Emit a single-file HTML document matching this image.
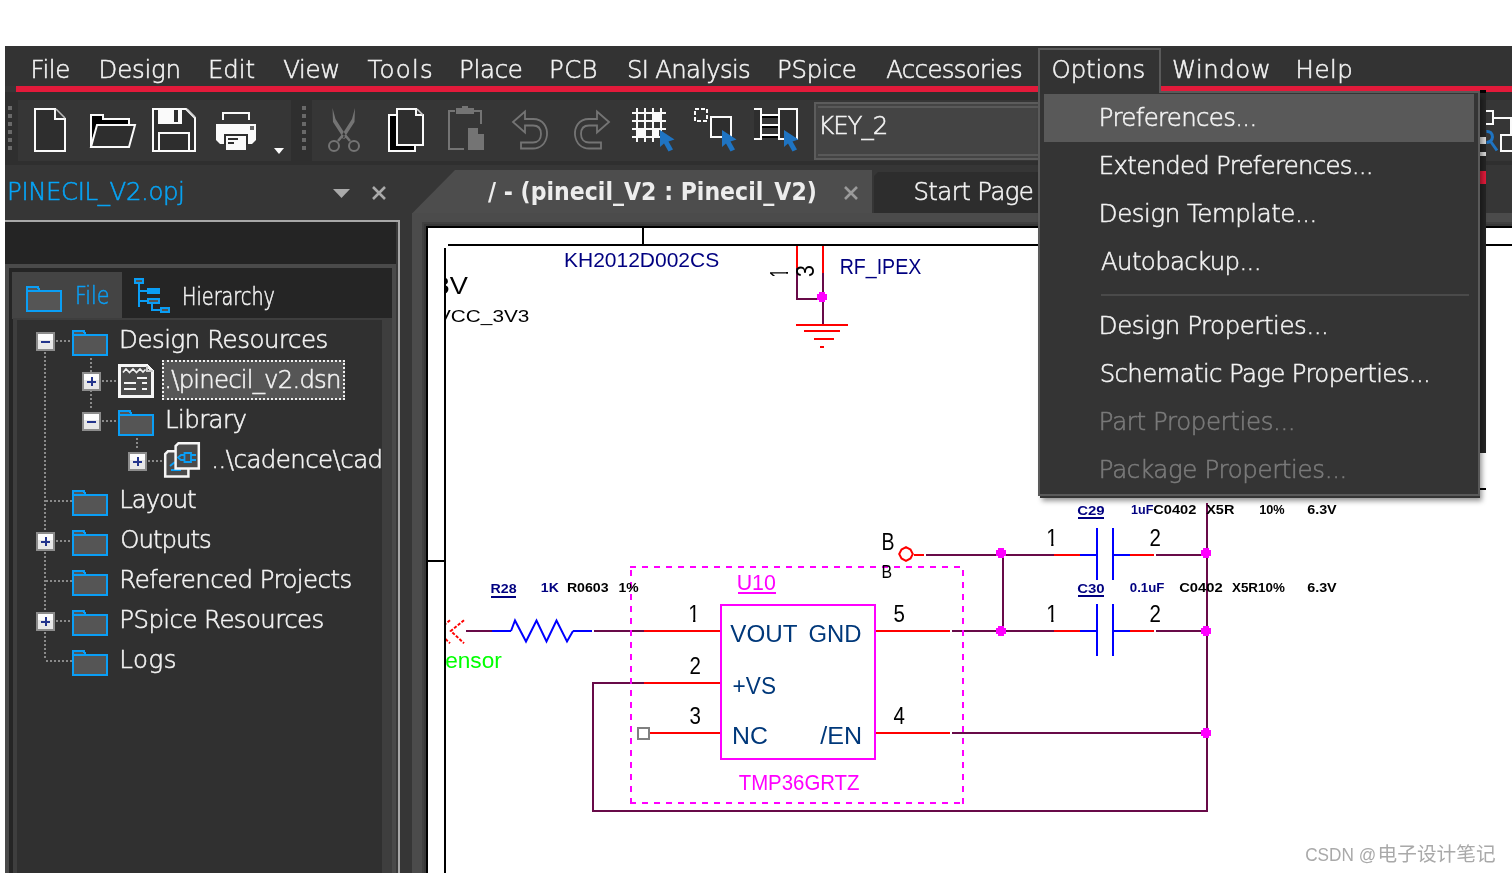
<!DOCTYPE html>
<html><head><meta charset="utf-8"><title>OrCAD Capture - Options</title>
<style>
html,body{margin:0;padding:0;background:#fff;}
body{width:1512px;height:873px;position:relative;overflow:hidden;}
.b{position:absolute;box-sizing:border-box;}
.t{position:absolute;white-space:pre;}
svg{position:absolute;left:0;top:0;}
</style></head><body><div id="app" style="position:absolute;left:0;top:0;width:1512px;height:873px;will-change:transform;">

<div class="b" style="left:5px;top:46px;width:1507px;height:827px;background:#363636;"></div>
<div class="b" style="left:5px;top:46px;width:1507px;height:40px;background:#333333;"></div>
<div class="b" style="left:16px;top:86px;width:1496px;height:6px;background:#e21a3a;"></div>
<div class="b" style="left:5px;top:92px;width:1507px;height:73px;background:#2f2f2f;"></div>
<div class="b" style="left:18px;top:100px;width:273px;height:61px;background:#363636;"></div>
<div class="b" style="left:312px;top:100px;width:1200px;height:61px;background:#363636;"></div>
<div class="b" style="left:8px;top:106px;width:4px;height:4px;background:#696969;"></div>
<div class="b" style="left:8px;top:114px;width:4px;height:4px;background:#696969;"></div>
<div class="b" style="left:8px;top:122px;width:4px;height:4px;background:#696969;"></div>
<div class="b" style="left:8px;top:130px;width:4px;height:4px;background:#696969;"></div>
<div class="b" style="left:8px;top:138px;width:4px;height:4px;background:#696969;"></div>
<div class="b" style="left:8px;top:146px;width:4px;height:4px;background:#696969;"></div>
<div class="b" style="left:302px;top:106px;width:4px;height:4px;background:#696969;"></div>
<div class="b" style="left:302px;top:114px;width:4px;height:4px;background:#696969;"></div>
<div class="b" style="left:302px;top:122px;width:4px;height:4px;background:#696969;"></div>
<div class="b" style="left:302px;top:130px;width:4px;height:4px;background:#696969;"></div>
<div class="b" style="left:302px;top:138px;width:4px;height:4px;background:#696969;"></div>
<div class="b" style="left:302px;top:146px;width:4px;height:4px;background:#696969;"></div>
<div class="t" style="left:30.57px;top:57.86px;font:200 24.4px/1 'DejaVu Sans','Liberation Sans',sans-serif;letter-spacing:-0.371px;color:#f2f2f2;-webkit-text-stroke:0.55px #f2f2f2;">File</div>
<div class="t" style="left:98.57px;top:57.86px;font:200 24.4px/1 'DejaVu Sans','Liberation Sans',sans-serif;letter-spacing:-0.192px;color:#f2f2f2;-webkit-text-stroke:0.55px #f2f2f2;">Design</div>
<div class="t" style="left:208.07px;top:57.86px;font:200 24.4px/1 'DejaVu Sans','Liberation Sans',sans-serif;letter-spacing:-0.103px;color:#f2f2f2;-webkit-text-stroke:0.55px #f2f2f2;">Edit</div>
<div class="t" style="left:283.27px;top:57.86px;font:200 24.4px/1 'DejaVu Sans','Liberation Sans',sans-serif;letter-spacing:-0.341px;color:#f2f2f2;-webkit-text-stroke:0.55px #f2f2f2;">View</div>
<div class="t" style="left:367.51px;top:57.86px;font:200 24.4px/1 'DejaVu Sans','Liberation Sans',sans-serif;letter-spacing:1.293px;color:#f2f2f2;-webkit-text-stroke:0.55px #f2f2f2;">Tools</div>
<div class="t" style="left:459.07px;top:57.86px;font:200 24.4px/1 'DejaVu Sans','Liberation Sans',sans-serif;letter-spacing:-0.287px;color:#f2f2f2;-webkit-text-stroke:0.55px #f2f2f2;">Place</div>
<div class="t" style="left:549.07px;top:57.86px;font:200 24.4px/1 'DejaVu Sans','Liberation Sans',sans-serif;letter-spacing:0.406px;color:#f2f2f2;-webkit-text-stroke:0.55px #f2f2f2;">PCB</div>
<div class="t" style="left:626.93px;top:57.86px;font:200 24.4px/1 'DejaVu Sans','Liberation Sans',sans-serif;letter-spacing:-0.712px;color:#f2f2f2;-webkit-text-stroke:0.55px #f2f2f2;">SI Analysis</div>
<div class="t" style="left:777.07px;top:57.86px;font:200 24.4px/1 'DejaVu Sans','Liberation Sans',sans-serif;letter-spacing:-0.226px;color:#f2f2f2;-webkit-text-stroke:0.55px #f2f2f2;">PSpice</div>
<div class="t" style="left:886.27px;top:57.86px;font:200 24.4px/1 'DejaVu Sans','Liberation Sans',sans-serif;letter-spacing:-0.654px;color:#f2f2f2;-webkit-text-stroke:0.55px #f2f2f2;">Accessories</div>
<div class="t" style="left:1171.91px;top:57.86px;font:200 24.4px/1 'DejaVu Sans','Liberation Sans',sans-serif;letter-spacing:0.505px;color:#f2f2f2;-webkit-text-stroke:0.55px #f2f2f2;">Window</div>
<div class="t" style="left:1295.57px;top:57.86px;font:200 24.4px/1 'DejaVu Sans','Liberation Sans',sans-serif;letter-spacing:0.542px;color:#f2f2f2;-webkit-text-stroke:0.55px #f2f2f2;">Help</div>
<div class="b" style="left:814px;top:102px;width:662px;height:58px;background:#444444;border:2px solid #5c5c5c;"></div>
<div class="b" style="left:818px;top:106px;width:656px;height:2px;background:#595959;"></div>
<div class="b" style="left:818px;top:154px;width:656px;height:2px;background:#595959;"></div>
<div class="t" style="left:818.15px;top:114.16px;font:200 24.4px/1 'DejaVu Sans','Liberation Sans',sans-serif;letter-spacing:-0.972px;color:#f2f2f2;-webkit-text-stroke:0.55px #f2f2f2;">KEY_2</div>
<div class="b" style="left:5px;top:165px;width:407px;height:55px;background:#363636;"></div>
<div class="t" style="left:7.07px;top:179.66px;font:200 24.4px/1 'DejaVu Sans','Liberation Sans',sans-serif;letter-spacing:-0.380px;color:#06a4f6;-webkit-text-stroke:0.55px #06a4f6;">PINECIL_V2.opj</div>
<svg width="1512" height="873" viewBox="0 0 1512 873"><polygon points="333,189 350,189 341.5,198" fill="#aaa"/><path d="M373 187 L385 199 M385 187 L373 199" stroke="#aaa" stroke-width="2.6"/></svg>
<div class="b" style="left:5px;top:220px;width:395px;height:2px;background:#a8a8a8;"></div>
<div class="b" style="left:398px;top:220px;width:2px;height:653px;background:#a8a8a8;"></div>
<div class="b" style="left:5px;top:222px;width:393px;height:651px;background:#3a3a3a;"></div>
<div class="b" style="left:5px;top:222px;width:391px;height:42px;background:#242424;"></div>
<div class="b" style="left:5px;top:264px;width:391px;height:609px;background:#4a4a4a;"></div>
<div class="b" style="left:9px;top:268px;width:383px;height:605px;background:#252525;"></div>
<div class="b" style="left:12px;top:272px;width:110px;height:47px;background:#444444;"></div>
<div class="b" style="left:13px;top:318px;width:379px;height:555px;background:#3e3e3e;"></div>
<div class="b" style="left:17px;top:320px;width:365px;height:553px;background:#303030;"></div>
<svg width="1512" height="873" viewBox="0 0 1512 873" shape-rendering="crispEdges">
<path d="M27 287 H38 L39.5 291 H61 V311 H27 Z" fill="#555" stroke="#0a9ef5" stroke-width="2"/><path d="M27 291 H39" stroke="#0a9ef5" stroke-width="2"/>
<g stroke="#0a9ef5" stroke-width="2" fill="none"><rect x="135" y="279" width="8" height="4" fill="#555"/><path d="M139 284 V307 M139 291 H147 M139 301 H147 M152 302 V310 H160"/><rect x="148" y="289" width="11" height="4" fill="#0a9ef5"/><rect x="148" y="299" width="11" height="4" fill="#555"/><rect x="161" y="308" width="8" height="4" fill="#555"/></g>
<path d="M45 352 V660 M56 341 H72 M46 501 H72 M56 541 H72 M46 581 H72 M56 621 H72 M46 661 H72" stroke="#8a8a8a" stroke-width="2" stroke-dasharray="2 2" fill="none"/>
<path d="M91 358 V410 M102 381 H118 M102 421 H118 M137 438 V450 M148 461 H164" stroke="#8a8a8a" stroke-width="2" stroke-dasharray="2 2" fill="none"/>
<rect x="37" y="333" width="17" height="17" fill="#e8e8e8" stroke="#8c8c8c" stroke-width="2"/><rect x="38" y="334" width="15" height="6" fill="#fdfdfd"/><path d="M41 341.5 H50" stroke="#23348c" stroke-width="2"/>
<rect x="83" y="373" width="17" height="17" fill="#e8e8e8" stroke="#8c8c8c" stroke-width="2"/><rect x="84" y="374" width="15" height="6" fill="#fdfdfd"/><path d="M87 381.5 H96" stroke="#23348c" stroke-width="2"/><path d="M91.5 377 V386" stroke="#23348c" stroke-width="2"/>
<rect x="83" y="413" width="17" height="17" fill="#e8e8e8" stroke="#8c8c8c" stroke-width="2"/><rect x="84" y="414" width="15" height="6" fill="#fdfdfd"/><path d="M87 421.5 H96" stroke="#23348c" stroke-width="2"/>
<rect x="129" y="453" width="17" height="17" fill="#e8e8e8" stroke="#8c8c8c" stroke-width="2"/><rect x="130" y="454" width="15" height="6" fill="#fdfdfd"/><path d="M133 461.5 H142" stroke="#23348c" stroke-width="2"/><path d="M137.5 457 V466" stroke="#23348c" stroke-width="2"/>
<rect x="37" y="533" width="17" height="17" fill="#e8e8e8" stroke="#8c8c8c" stroke-width="2"/><rect x="38" y="534" width="15" height="6" fill="#fdfdfd"/><path d="M41 541.5 H50" stroke="#23348c" stroke-width="2"/><path d="M45.5 537 V546" stroke="#23348c" stroke-width="2"/>
<rect x="37" y="613" width="17" height="17" fill="#e8e8e8" stroke="#8c8c8c" stroke-width="2"/><rect x="38" y="614" width="15" height="6" fill="#fdfdfd"/><path d="M41 621.5 H50" stroke="#23348c" stroke-width="2"/><path d="M45.5 617 V626" stroke="#23348c" stroke-width="2"/>
<path d="M73 331 H84 L85.5 335 H107 V355 H73 Z" fill="#555" stroke="#0a9ef5" stroke-width="2"/><path d="M73 335 H85" stroke="#0a9ef5" stroke-width="2"/>
<path d="M73 491 H84 L85.5 495 H107 V515 H73 Z" fill="#555" stroke="#0a9ef5" stroke-width="2"/><path d="M73 495 H85" stroke="#0a9ef5" stroke-width="2"/>
<path d="M73 531 H84 L85.5 535 H107 V555 H73 Z" fill="#555" stroke="#0a9ef5" stroke-width="2"/><path d="M73 535 H85" stroke="#0a9ef5" stroke-width="2"/>
<path d="M73 571 H84 L85.5 575 H107 V595 H73 Z" fill="#555" stroke="#0a9ef5" stroke-width="2"/><path d="M73 575 H85" stroke="#0a9ef5" stroke-width="2"/>
<path d="M73 611 H84 L85.5 615 H107 V635 H73 Z" fill="#555" stroke="#0a9ef5" stroke-width="2"/><path d="M73 615 H85" stroke="#0a9ef5" stroke-width="2"/>
<path d="M73 651 H84 L85.5 655 H107 V675 H73 Z" fill="#555" stroke="#0a9ef5" stroke-width="2"/><path d="M73 655 H85" stroke="#0a9ef5" stroke-width="2"/>
<path d="M119 411 H130 L131.5 415 H153 V435 H119 Z" fill="#555" stroke="#0a9ef5" stroke-width="2"/><path d="M119 415 H131" stroke="#0a9ef5" stroke-width="2"/>
<path d="M119.5 365.5 H147 L152.5 371 V396.5 H119.5 Z" fill="#4a4a4a" stroke="#f6f6f6" stroke-width="2.6"/><path d="M147 365.5 V371 H152.5" fill="none" stroke="#ccc" stroke-width="1.6"/><path d="M123 372.5 l3 -3.5 l3.5 3.5 l3.5 -3.5 l3.5 3.5 l3.5 -3.5 l3 3 l2.5 -2.5" fill="none" stroke="#f0f0f0" stroke-width="1.7" shape-rendering="auto"/><path d="M137 378 H146.5 M123.5 383.2 H136 M141.5 383.2 H146.5 M123.5 388.5 H136 M141.5 388.5 H146.5" stroke="#f4f4f4" stroke-width="2"/>
<path d="M168 451.2 H188.4 V476.6 H165.2 V454 Z" fill="#4a4a4a" stroke="#f6f6f6" stroke-width="2.5" shape-rendering="auto"/><path d="M170 466 l5 -4 M171 470 h10" fill="none" stroke="#0a9ef5" stroke-width="2" shape-rendering="auto"/><path d="M178.5 443.2 H198.8 V468.4 H175.6 V446 Z" fill="#4a4a4a" stroke="#f6f6f6" stroke-width="2.5" shape-rendering="auto"/><path d="M184.5 453 H191 V462 H184.5 Z M184.5 455 H181 L177.5 458 M184.5 460 H181 L178.5 458 M191 455 H196 M191 460 H196" fill="none" stroke="#0a9ef5" stroke-width="1.8" shape-rendering="auto"/>
</svg>
<div class="t" style="left:75.23px;top:284.16px;font:200 24.4px/1 'DejaVu Sans','Liberation Sans',sans-serif;letter-spacing:0.000px;color:#0a9ef5;-webkit-text-stroke:0.55px #0a9ef5;transform:scaleX(0.8446);transform-origin:0 0;">File</div>
<div class="t" style="left:182.39px;top:284.76px;font:200 24.4px/1 'DejaVu Sans','Liberation Sans',sans-serif;letter-spacing:0.000px;color:#f2f2f2;-webkit-text-stroke:0.55px #f2f2f2;transform:scaleX(0.7889);transform-origin:0 0;">Hierarchy</div>
<div class="b" style="left:162px;top:360px;width:183px;height:40px;background:#565656;border:2px dotted #f0f0f0;"></div>
<div class="t" style="left:119.07px;top:328.36px;font:200 24.4px/1 'DejaVu Sans','Liberation Sans',sans-serif;letter-spacing:-0.431px;color:#f2f2f2;-webkit-text-stroke:0.55px #f2f2f2;">Design Resources</div>
<div class="t" style="left:164.33px;top:368.36px;font:200 24.4px/1 'DejaVu Sans','Liberation Sans',sans-serif;letter-spacing:-0.807px;color:#f2f2f2;-webkit-text-stroke:0.55px #f2f2f2;">.\pinecil_v2.dsn</div>
<div class="t" style="left:165.07px;top:408.36px;font:200 24.4px/1 'DejaVu Sans','Liberation Sans',sans-serif;letter-spacing:-0.588px;color:#f2f2f2;-webkit-text-stroke:0.55px #f2f2f2;">Library</div>
<div class="t" style="left:211.33px;top:448.36px;font:200 24.4px/1 'DejaVu Sans','Liberation Sans',sans-serif;letter-spacing:-0.519px;color:#f2f2f2;-webkit-text-stroke:0.55px #f2f2f2;">..\cadence\cad</div>
<div class="t" style="left:119.37px;top:488.36px;font:200 24.4px/1 'DejaVu Sans','Liberation Sans',sans-serif;letter-spacing:-1.127px;color:#f2f2f2;-webkit-text-stroke:0.55px #f2f2f2;">Layout</div>
<div class="t" style="left:120.35px;top:528.36px;font:200 24.4px/1 'DejaVu Sans','Liberation Sans',sans-serif;letter-spacing:-1.020px;color:#f2f2f2;-webkit-text-stroke:0.55px #f2f2f2;">Outputs</div>
<div class="t" style="left:119.37px;top:568.36px;font:200 24.4px/1 'DejaVu Sans','Liberation Sans',sans-serif;letter-spacing:-0.520px;color:#f2f2f2;-webkit-text-stroke:0.55px #f2f2f2;">Referenced Projects</div>
<div class="t" style="left:119.37px;top:608.36px;font:200 24.4px/1 'DejaVu Sans','Liberation Sans',sans-serif;letter-spacing:-0.555px;color:#f2f2f2;-webkit-text-stroke:0.55px #f2f2f2;">PSpice Resources</div>
<div class="t" style="left:119.37px;top:648.36px;font:200 24.4px/1 'DejaVu Sans','Liberation Sans',sans-serif;letter-spacing:0.516px;color:#f2f2f2;-webkit-text-stroke:0.55px #f2f2f2;">Logs</div>
<div class="b" style="left:412px;top:213px;width:1100px;height:660px;background:#4b4b4b;"></div>
<div class="b" style="left:422px;top:222px;width:1090px;height:651px;background:#404040;"></div>
<div class="b" style="left:424px;top:224px;width:1088px;height:649px;background:#383838;"></div>
<div class="b" style="left:426px;top:226px;width:1086px;height:647px;background:#000000;"></div>
<div class="b" style="left:428px;top:228px;width:1084px;height:645px;background:#ffffff;"></div>
<svg width="1512" height="873" viewBox="0 0 1512 873" font-family="'Liberation Sans',sans-serif">
<defs><clipPath id="pg"><rect x="446" y="228" width="1066" height="645"/></clipPath><clipPath id="one"><path d="M-10 -24 H10 V-2.3 H1.8 V1 H-1 V-2.3 H-10 Z"/></clipPath><clipPath id="oner"><path d="M0 -24 H14 V-2.3 H8.8 V1 H6 V-2.3 H0 Z"/></clipPath></defs>
<g shape-rendering="crispEdges" fill="none" stroke-width="2">
<path d="M448 245 H1512 M445 248 V873 M643 228 V245 M428 561 H445" stroke="#000"/>
<path d="M797 246 V268 M823 246 V273" stroke="#ff0000"/>
<path d="M797 268 V299 H823 M823 273 V325" stroke="#680a48"/>
<path d="M796 325 H848 M804 331 H840 M814 339 H834 M820 347 H824" stroke="#ff0000"/>
<path d="M466 631 H492 M594 631 H644" stroke="#680a48"/>
<path d="M644 631 H721 M644 683 H721 M649 733 H721 M875 631 H950 M875 733 H950" stroke="#ff0000"/>
<path d="M593 683 H644 M593 682 V811 H1207 M952 631 H1003 M952 733 H1207 M1207 503 V812 M1003 555 V631 M926 555 H1054 M1156 555 H1207 M1003 631 H1054 M1156 631 H1207" stroke="#680a48"/>
<path d="M1054 555 H1080 M1130 555 H1154 M1054 631 H1080 M1130 631 H1154 M914 555 H924" stroke="#ff0000"/>
<path d="M1080 555 H1096 M1097 528 V580 M1113 528 V580 M1113 555 H1130 M1080 631 H1096 M1097 604 V656 M1113 604 V656 M1113 631 H1130" stroke="#0000ff"/>
<path d="M492 631 H511 M573 631 H592" stroke="#0000ff"/>
<rect x="721" y="605" width="154" height="154" stroke="#ff00ff"/>
<path d="M630 567 H964 M631 570 V804 M630 803 H964 M963 570 V804" stroke="#ff00ff" stroke-dasharray="6 6"/>
<rect x="638" y="728" width="11" height="11" stroke="#808080"/>
<path d="M738 593 H776" stroke="#ff00ff"/>
<path d="M491 597 H516 M1078 518 H1104 M1078 595.5 H1104" stroke="#000080"/>
</g>
<path d="M511 631 L515 620.5 L526 641.5 L536.5 620.5 L546.5 641.5 L556.5 620.5 L567 641.5 L573 631" fill="none" stroke="#0000ff" stroke-width="2"/>
<g clip-path="url(#pg)"><path d="M464 620.2 L450.8 631 L464 643.2 M450 620.2 L436.8 631 L450 643.2" fill="none" stroke="#ff0000" stroke-width="2" stroke-dasharray="3.2 1.6"/></g>
<path d="M906 547.2 L910.5 549.5 L912.8 554 L910.5 558.5 L906 560.8 L901.5 558.5 L899.2 554 L901.5 549.5 Z" fill="none" stroke="#ff0000" stroke-width="2"/>
<path d="M819 292 h6 v2 h2 v6 h-2 v2 h-6 v-2 h-2 v-6 h2 z" fill="#ff00ff"/>
<path d="M998 548 h6 v2 h2 v6 h-2 v2 h-6 v-2 h-2 v-6 h2 z" fill="#ff00ff"/>
<path d="M998 626 h6 v2 h2 v6 h-2 v2 h-6 v-2 h-2 v-6 h2 z" fill="#ff00ff"/>
<path d="M1203 548 h6 v2 h2 v6 h-2 v2 h-6 v-2 h-2 v-6 h2 z" fill="#ff00ff"/>
<path d="M1203 626 h6 v2 h2 v6 h-2 v2 h-6 v-2 h-2 v-6 h2 z" fill="#ff00ff"/>
<path d="M1203 728 h6 v2 h2 v6 h-2 v2 h-6 v-2 h-2 v-6 h2 z" fill="#ff00ff"/>
<text x="564.0" y="267.3" font-size="21" font-weight="400" fill="#000080" textLength="155.2" lengthAdjust="spacingAndGlyphs" >KH2012D002CS</text>
<g clip-path="url(#pg)">
<text x="434.6" y="293.7" font-size="23" font-weight="400" fill="#000" textLength="33.3" lengthAdjust="spacingAndGlyphs" >3V</text>
<text x="437.0" y="321.6" font-size="17" font-weight="400" fill="#000" textLength="92.4" lengthAdjust="spacingAndGlyphs" >VCC_3V3</text>
<text x="430.1" y="667.8" font-size="22.5" font-weight="400" fill="#00ff00" textLength="71.7" lengthAdjust="spacingAndGlyphs" >Sensor</text>
</g>
<text x="839.7" y="274.0" font-size="22" font-weight="400" fill="#000080" textLength="81.6" lengthAdjust="spacingAndGlyphs" >RF_IPEX</text>
<g transform="translate(788,277.5) rotate(-90) scale(0.62,1)"><text x="0" y="0" font-size="25" fill="#000" clip-path="url(#oner)">1</text></g>
<g transform="translate(814,277) rotate(-90) scale(0.85,1)"><text x="0" y="0" font-size="25" fill="#000">3</text></g>
<g transform="translate(693.9,621.9) scale(0.83,1)"><text x="0" y="0" font-size="24.7" text-anchor="middle" fill="#000" clip-path="url(#one)">1</text></g>
<g transform="translate(695.1,674) scale(0.83,1)"><text x="0" y="0" font-size="24.7" text-anchor="middle" fill="#000">2</text></g>
<g transform="translate(695.3,724) scale(0.83,1)"><text x="0" y="0" font-size="24.7" text-anchor="middle" fill="#000">3</text></g>
<g transform="translate(899.2,621.9) scale(0.83,1)"><text x="0" y="0" font-size="24.7" text-anchor="middle" fill="#000">5</text></g>
<g transform="translate(899.2,724) scale(0.83,1)"><text x="0" y="0" font-size="24.7" text-anchor="middle" fill="#000">4</text></g>
<g transform="translate(1052,545.7) scale(0.83,1)"><text x="0" y="0" font-size="24.7" text-anchor="middle" fill="#000" clip-path="url(#one)">1</text></g>
<g transform="translate(1155.1,545.7) scale(0.83,1)"><text x="0" y="0" font-size="24.7" text-anchor="middle" fill="#000">2</text></g>
<g transform="translate(1052,621.9) scale(0.83,1)"><text x="0" y="0" font-size="24.7" text-anchor="middle" fill="#000" clip-path="url(#one)">1</text></g>
<g transform="translate(1155.1,621.9) scale(0.83,1)"><text x="0" y="0" font-size="24.7" text-anchor="middle" fill="#000">2</text></g>
<text x="730.3" y="642.0" font-size="24.7" font-weight="400" fill="#00387a" textLength="67.2" lengthAdjust="spacingAndGlyphs" >VOUT</text>
<text x="808.5" y="642.0" font-size="24.7" font-weight="400" fill="#00387a" textLength="53.0" lengthAdjust="spacingAndGlyphs" >GND</text>
<text x="732.6" y="693.7" font-size="24.7" font-weight="400" fill="#00387a" textLength="43.4" lengthAdjust="spacingAndGlyphs" >+VS</text>
<text x="732.1" y="743.7" font-size="24.7" font-weight="400" fill="#00387a" textLength="35.9" lengthAdjust="spacingAndGlyphs" >NC</text>
<text x="820.3" y="743.7" font-size="24.7" font-weight="400" fill="#00387a" textLength="41.8" lengthAdjust="spacingAndGlyphs" >/EN</text>
<text x="736.7" y="590.0" font-size="22.4" font-weight="400" fill="#ff00ff" textLength="39.2" lengthAdjust="spacingAndGlyphs" >U10</text>
<text x="738.7" y="789.5" font-size="21.5" font-weight="400" fill="#ff00ff" textLength="120.8" lengthAdjust="spacingAndGlyphs" >TMP36GRTZ</text>
<text x="881.6" y="550.0" font-size="24" font-weight="400" fill="#000" textLength="13.0" lengthAdjust="spacingAndGlyphs" >B</text>
<text x="881.6" y="577.7" font-size="18" font-weight="400" fill="#000" textLength="10.6" lengthAdjust="spacingAndGlyphs" >B</text>
<text x="490.6" y="593.4" font-size="12.5" font-weight="700" fill="#000080" textLength="26.1" lengthAdjust="spacingAndGlyphs" >R28</text>
<text x="540.8" y="591.8" font-size="12.5" font-weight="700" fill="#000080" textLength="18.0" lengthAdjust="spacingAndGlyphs" >1K</text>
<text x="566.9" y="591.8" font-size="12.5" font-weight="700" fill="#000" textLength="41.7" lengthAdjust="spacingAndGlyphs" >R0603</text>
<text x="618.6" y="591.8" font-size="12.5" font-weight="700" fill="#000" textLength="20.1" lengthAdjust="spacingAndGlyphs" >1%</text>
<text x="1077.2" y="515.0" font-size="12.5" font-weight="700" fill="#000080" textLength="27.5" lengthAdjust="spacingAndGlyphs" >C29</text>
<text x="1131.0" y="513.7" font-size="12.5" font-weight="700" fill="#000080" textLength="22.3" lengthAdjust="spacingAndGlyphs" >1uF</text>
<text x="1153.2" y="513.7" font-size="12.5" font-weight="700" fill="#000" textLength="43.1" lengthAdjust="spacingAndGlyphs" >C0402</text>
<text x="1206.2" y="513.7" font-size="12.5" font-weight="700" fill="#000" textLength="28.2" lengthAdjust="spacingAndGlyphs" >X5R</text>
<text x="1259.2" y="513.7" font-size="12.5" font-weight="700" fill="#000" textLength="25.5" lengthAdjust="spacingAndGlyphs" >10%</text>
<text x="1307.2" y="513.7" font-size="12.5" font-weight="700" fill="#000" textLength="29.5" lengthAdjust="spacingAndGlyphs" >6.3V</text>
<text x="1077.2" y="592.8" font-size="12.5" font-weight="700" fill="#000080" textLength="27.5" lengthAdjust="spacingAndGlyphs" >C30</text>
<text x="1129.8" y="591.8" font-size="12.5" font-weight="700" fill="#000080" textLength="34.6" lengthAdjust="spacingAndGlyphs" >0.1uF</text>
<text x="1179.2" y="591.8" font-size="12.5" font-weight="700" fill="#000" textLength="43.5" lengthAdjust="spacingAndGlyphs" >C0402</text>
<text x="1232.0" y="591.8" font-size="12.5" font-weight="700" fill="#000" textLength="52.8" lengthAdjust="spacingAndGlyphs" >X5R10%</text>
<text x="1307.2" y="591.8" font-size="12.5" font-weight="700" fill="#000" textLength="29.5" lengthAdjust="spacingAndGlyphs" >6.3V</text>
<text x="1305.2" y="861" font-size="18.6" fill="#a9a9a9" textLength="71" lengthAdjust="spacingAndGlyphs">CSDN @</text>
<text x="1377.6" y="861" font-size="19.6" fill="#a9a9a9" textLength="118" lengthAdjust="spacingAndGlyphs" font-family="'Noto Sans CJK SC','WenQuanYi Zen Hei',sans-serif">电子设计笔记</text>
</svg>
<svg width="1512" height="873" viewBox="0 0 1512 873"><polygon points="412,213.5 455,170 872,170 872,213.5" fill="#4d4d4d"/><polygon points="874,213 874,176 878,172 1100,172 1100,213" fill="#2d2d2d"/><path d="M845 187 L857 199 M857 187 L845 199" stroke="#9a9a9a" stroke-width="2.6"/></svg>
<div class="t" style="left:488.00px;top:179.77px;font:700 24.5px/1 'DejaVu Sans Condensed','DejaVu Sans','Liberation Sans',sans-serif;letter-spacing:0.019px;color:#ededed;">/ - (pinecil_V2 : Pinecil_V2)</div>
<div class="t" style="left:913.43px;top:179.86px;font:200 24.4px/1 'DejaVu Sans','Liberation Sans',sans-serif;letter-spacing:-0.570px;color:#f2f2f2;-webkit-text-stroke:0.55px #f2f2f2;">Start Page</div>
<svg width="1512" height="873" viewBox="0 0 1512 873">
<g shape-rendering="crispEdges">
<path d="M35 109 H55 V119 H65 V151 H35 Z" fill="#2e2e2e" stroke="#fafafa" stroke-width="2"/>
<polygon points="91,115 103,115 103,119 129,119 129,125 97,125 91,141" fill="#000"/>
<path d="M91 147 V115 H103 V119 H129 V125" fill="none" stroke="#fafafa" stroke-width="2"/>
<path d="M153 109 H186 L195 118 V151 H153 Z" fill="#2e2e2e" stroke="#fafafa" stroke-width="2" shape-rendering="auto"/>
<rect x="158" y="109" width="24" height="15" fill="#fafafa"/><rect x="174" y="110" width="4" height="12" fill="#2e2e2e"/>
<rect x="159" y="133" width="30" height="18" fill="none" stroke="#fafafa" stroke-width="2"/>
<path d="M223 120 V113 H249 V120" fill="none" stroke="#fafafa" stroke-width="2"/>
<polygon points="216,124 256,124 256,140 252,144 220,144 216,140" fill="#fafafa" shape-rendering="auto"/>
<rect x="250" y="126" width="4" height="4" fill="#666"/>
<rect x="224" y="134" width="24" height="11" fill="#2e2e2e"/>
<rect x="226" y="136" width="20" height="14" fill="#fafafa"/>
<rect x="228" y="138" width="10" height="2" fill="#2e2e2e"/><rect x="228" y="142" width="6" height="2" fill="#2e2e2e"/>
<rect x="389" y="115" width="26" height="36" fill="#000" stroke="#fafafa" stroke-width="2"/>
<path d="M397 109 H416 V115 H423 V145 H397 Z" fill="#2e2e2e" stroke="#fafafa" stroke-width="2"/>
<path d="M455 111 H449 V149 H464 M474 111 H481 V124" fill="none" stroke="#747474" stroke-width="2"/>
<rect x="456" y="108" width="18" height="6" fill="#747474"/><rect x="462" y="106" width="6" height="3" fill="#747474"/>
<polygon points="468,128 478,128 478,134 484,134 484,150 468,150" fill="#747474"/>
<rect x="636" y="108" width="2" height="34" fill="#fafafa"/>
<rect x="644" y="108" width="2" height="34" fill="#fafafa"/>
<rect x="652" y="108" width="2" height="34" fill="#fafafa"/>
<rect x="660" y="108" width="2" height="34" fill="#fafafa"/>
<rect x="632" y="112" width="34" height="2" fill="#fafafa"/>
<rect x="632" y="120" width="34" height="2" fill="#fafafa"/>
<rect x="632" y="128" width="34" height="2" fill="#fafafa"/>
<rect x="632" y="136" width="34" height="2" fill="#fafafa"/>
<rect x="653" y="113" width="8" height="8" fill="#fafafa"/><rect x="637" y="129" width="8" height="8" fill="#fafafa"/><rect x="653" y="129" width="6" height="8" fill="#fafafa"/>
<rect x="695" y="109" width="12" height="12" fill="none" stroke="#fafafa" stroke-width="2" stroke-dasharray="4 2"/>
<rect x="711" y="117" width="20" height="20" fill="#2e2e2e" stroke="#fafafa" stroke-width="2"/>
<rect x="762" y="116" width="16" height="2" fill="#000"/><rect x="762" y="126" width="16" height="2" fill="#000"/><rect x="762" y="136" width="16" height="2" fill="#000"/>
<rect x="754" y="110" width="6" height="28" fill="#2e2e2e"/>
<path d="M754 109 H761 V139 H754 M762 115 H778 M762 125 H778 M762 135 H778" fill="none" stroke="#fafafa" stroke-width="2"/>
<rect x="779" y="109" width="18" height="30" fill="#2e2e2e" stroke="#fafafa" stroke-width="2"/>
<polygon points="274,148 284,148 279,154" fill="#fafafa" shape-rendering="auto"/>
<path d="M1486 111 H1493 V124 H1486 M1494 118 H1511 V135 M1512 135 H1500.5 V150.5 H1512" fill="none" stroke="#fafafa" stroke-width="2"/>
<rect x="1480" y="137" width="6" height="7" fill="#d8d8d8"/><rect x="1480" y="152" width="6" height="4" fill="#d8d8d8"/>
</g>
<path d="M56 109 L65 118" stroke="#bbb" stroke-width="1.6"/>
<path d="M97 125 H135 L129 147 H91 Z" fill="#2e2e2e" stroke="#fafafa" stroke-width="2"/>
<path d="M187 109 L195 117" stroke="#ccc" stroke-width="1.6"/>
<path d="M417 109 L423 115" stroke="#ccc" stroke-width="1.6"/>
<path d="M332.5 108 L335.5 119 L347 137 L344 139 L333 122 Z M355 108 L352 119 L340.5 137 L343.5 139 L354.5 122 Z" fill="#747474"/>
<circle cx="334" cy="146" r="5" fill="none" stroke="#747474" stroke-width="2"/><circle cx="354" cy="146" r="5" fill="none" stroke="#747474" stroke-width="2"/>
<path d="M338 141 L343 135 M350 141 L345 135" stroke="#747474" stroke-width="2.5"/>
<path d="M513 122 L525 111.5 V119 H533 C544 119 547.5 128 547 135 C546 144 540 148.5 533 148.5 H521 V142.5 H533 C538 142.5 541 139 541 134 C541 128 538 125.5 533 125.5 H525 V132.5 Z" fill="none" stroke="#747474" stroke-width="1.8"/>
<g transform="translate(1122,0) scale(-1,1)"><path d="M513 122 L525 111.5 V119 H533 C544 119 547.5 128 547 135 C546 144 540 148.5 533 148.5 H521 V142.5 H533 C538 142.5 541 139 541 134 C541 128 538 125.5 533 125.5 H525 V132.5 Z" fill="none" stroke="#747474" stroke-width="1.8"/></g>
<polygon points="660,130 660,147 664,143.5 668.5,151.5 673,149.5 668.5,141.5 674.5,139.5" fill="#1f74c2"/>
<polygon points="722,130 722,147 726,143.5 730.5,151.5 735,149.5 730.5,141.5 736.5,139.5" fill="#1f74c2"/>
<polygon points="784,130 784,147 788,143.5 792.5,151.5 797,149.5 792.5,141.5 798.5,139.5" fill="#1f74c2"/>
<path d="M1486.5 131.5 Q1492 131 1492.5 137 Q1492 142 1486.5 142.5 M1491 142 L1497 150.5" fill="none" stroke="#1f74c2" stroke-width="3"/>
</svg>
<div class="b" style="left:1480px;top:90px;width:6px;height:363px;background:#252525;"></div>
<div class="b" style="left:1480px;top:90px;width:6px;height:3px;background:#000;"></div>
<div class="b" style="left:1480px;top:137px;width:6px;height:7px;background:#d8d8d8;"></div>
<div class="b" style="left:1480px;top:152px;width:6px;height:4px;background:#d8d8d8;"></div>
<div class="b" style="left:1480px;top:171px;width:6px;height:13px;background:#e21a3a;"></div>
<div class="b" style="left:1480px;top:488px;width:6px;height:2px;background:#000;"></div>
<div class="b" style="left:1040px;top:94px;width:440px;height:404px;background:#343434;box-shadow:2px 3px 5px rgba(0,0,0,0.42);"></div>
<div class="b" style="left:1038px;top:48px;width:123px;height:46px;background:#333333;border:2px solid #5a5a5a;border-bottom:none;"></div>
<div class="t" style="left:1051.55px;top:57.86px;font:200 24.4px/1 'DejaVu Sans','Liberation Sans',sans-serif;letter-spacing:-0.067px;color:#f2f2f2;-webkit-text-stroke:0.55px #f2f2f2;">Options</div>
<div class="b" style="left:1038px;top:91px;width:442px;height:405px;background:#343434;border:2px solid #5a5a5a;"></div>
<div class="b" style="left:1040px;top:88px;width:119px;height:6px;background:#333333;"></div>
<div class="b" style="left:1044px;top:94px;width:430px;height:48px;background:#595959;"></div>
<div class="b" style="left:1101px;top:294px;width:368px;height:2px;background:#4a4a4a;"></div>
<div class="t" style="left:1098.87px;top:105.56px;font:200 24.4px/1 'DejaVu Sans','Liberation Sans',sans-serif;letter-spacing:-0.642px;color:#f2f2f2;-webkit-text-stroke:0.55px #f2f2f2;">Preferences...</div>
<div class="t" style="left:1098.87px;top:153.56px;font:200 24.4px/1 'DejaVu Sans','Liberation Sans',sans-serif;letter-spacing:-0.707px;color:#f2f2f2;-webkit-text-stroke:0.55px #f2f2f2;">Extended Preferences...</div>
<div class="t" style="left:1098.87px;top:201.56px;font:200 24.4px/1 'DejaVu Sans','Liberation Sans',sans-serif;letter-spacing:-0.424px;color:#f2f2f2;-webkit-text-stroke:0.55px #f2f2f2;">Design Template...</div>
<div class="t" style="left:1101.07px;top:249.56px;font:200 24.4px/1 'DejaVu Sans','Liberation Sans',sans-serif;letter-spacing:-0.641px;color:#f2f2f2;-webkit-text-stroke:0.55px #f2f2f2;">Autobackup...</div>
<div class="t" style="left:1098.87px;top:314.16px;font:200 24.4px/1 'DejaVu Sans','Liberation Sans',sans-serif;letter-spacing:-0.403px;color:#f2f2f2;-webkit-text-stroke:0.55px #f2f2f2;">Design Properties...</div>
<div class="t" style="left:1099.73px;top:362.16px;font:200 24.4px/1 'DejaVu Sans','Liberation Sans',sans-serif;letter-spacing:-0.627px;color:#f2f2f2;-webkit-text-stroke:0.55px #f2f2f2;">Schematic Page Properties...</div>
<div class="t" style="left:1098.87px;top:410.16px;font:200 24.4px/1 'DejaVu Sans','Liberation Sans',sans-serif;letter-spacing:-0.335px;color:#7a7a7a;-webkit-text-stroke:0.55px #7a7a7a;">Part Properties...</div>
<div class="t" style="left:1098.87px;top:458.16px;font:200 24.4px/1 'DejaVu Sans','Liberation Sans',sans-serif;letter-spacing:-0.301px;color:#7a7a7a;-webkit-text-stroke:0.55px #7a7a7a;">Package Properties...</div>
</div></body></html>
